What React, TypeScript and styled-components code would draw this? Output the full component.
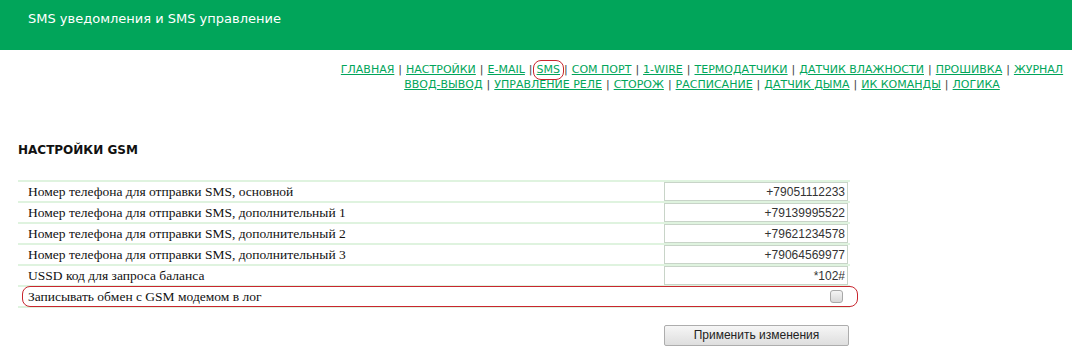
import React from "react";
import styled, { createGlobalStyle } from "styled-components";

const Global = createGlobalStyle`
  html, body { margin: 0; padding: 0; background: #fff; }
  body { font-family: "DejaVu Sans", Verdana, sans-serif; }
`;

const Header = styled.header`
  height: 50px;
  background: #01a55a;
  color: #fff;
  font-family: "DejaVu Sans", Verdana, sans-serif;
  font-size: 13px;
  padding: 11px 0 0 28px;
  box-sizing: border-box;
`;

const Nav = styled.nav`
  margin: 12px 0 0 332px;
  text-align: center;
  white-space: nowrap;
  font-family: "DejaVu Sans", Verdana, sans-serif;
  font-size: 11px;
  line-height: 15px;
  color: #444;
`;

const NavLink = styled.a<{ $marked?: boolean }>`
  color: #01a55a;
  text-decoration: underline;
  position: relative;
  &::after {
    content: "";
    display: ${(p) => (p.$marked ? "block" : "none")};
    position: absolute;
    left: -4px;
    right: -4px;
    top: -3px;
    bottom: -4px;
    border: 1.5px solid #c8262e;
    border-radius: 8px;
  }
`;

const Sep = styled.span`
  color: #444;
  margin: 0 4px;
`;

const Title = styled.h2`
  margin: 51px 0 0 18px;
  font-family: "DejaVu Sans", Verdana, sans-serif;
  font-size: 12px;
  font-weight: bold;
  color: #111;
`;

const Table = styled.div`
  margin: 23px 0 0 18px;
  width: 832px;
  border-top: 2px solid #dff3df;
`;

const Row = styled.div<{ $marked?: boolean }>`
  position: relative;
  display: flex;
  align-items: center;
  height: 19px;
  border-bottom: 2px solid #dff3df;
  &::after {
    content: "";
    display: ${(p) => (p.$marked ? "block" : "none")};
    position: absolute;
    left: 4px;
    right: -8px;
    top: -1px;
    bottom: -1px;
    border: 1.5px solid #c8262e;
    border-radius: 8px;
  }
`;

const Label = styled.div`
  flex: 1;
  padding-left: 10px;
  font-family: "Liberation Serif", "Times New Roman", serif;
  font-size: 13.5px;
  color: #111;
`;

const Input = styled.input`
  width: 184px;
  height: 19px;
  box-sizing: border-box;
  margin: 0 2px 0 0;
  border: 1px solid #c8d4c8;
  padding: 0 2px;
  text-align: right;
  font-family: "Liberation Sans", Arial, sans-serif;
  font-size: 12px;
  color: #333;
  background: #fff;
  outline: none;
`;

const Check = styled.span`
  width: 11px;
  height: 11px;
  margin-right: 7px;
  border: 1px solid #a8a8a8;
  border-radius: 3px;
  background: linear-gradient(#f4f4f4, #d8d8d8);
`;

const Actions = styled.div`
  margin: 16px 0 0 664px;
`;

const Button = styled.button`
  width: 185px;
  height: 21px;
  border: 1px solid #adadad;
  border-radius: 2px;
  background: linear-gradient(#f6f6f6, #dedede);
  font-family: "Liberation Sans", Arial, sans-serif;
  font-size: 12px;
  color: #222;
  padding: 0;
`;

const line1 = ["ГЛАВНАЯ", "НАСТРОЙКИ", "E-MAIL", "SMS", "COM ПОРТ", "1-WIRE", "ТЕРМОДАТЧИКИ", "ДАТЧИК ВЛАЖНОСТИ", "ПРОШИВКА", "ЖУРНАЛ"];
const line2 = ["ВВОД-ВЫВОД", "УПРАВЛЕНИЕ РЕЛЕ", "СТОРОЖ", "РАСПИСАНИЕ", "ДАТЧИК ДЫМА", "ИК КОМАНДЫ", "ЛОГИКА"];

const rows = [
  ["Номер телефона для отправки SMS, основной", "+79051112233"],
  ["Номер телефона для отправки SMS, дополнительный 1", "+79139995522"],
  ["Номер телефона для отправки SMS, дополнительный 2", "+79621234578"],
  ["Номер телефона для отправки SMS, дополнительный 3", "+79064569977"],
  ["USSD код для запроса баланса", "*102#"],
];

function Links({ items }: { items: string[] }) {
  return (
    <>
      {items.map((t, i) => (
        <React.Fragment key={t}>
          {i > 0 && <Sep>|</Sep>}
          <NavLink href="#" $marked={t === "SMS"}>{t}</NavLink>
        </React.Fragment>
      ))}
    </>
  );
}

export default function App() {
  return (
    <>
      <Global />
      <Header>SMS уведомления и SMS управление</Header>
      <Nav>
        <Links items={line1} />
        <br />
        <Links items={line2} />
      </Nav>
      <Title>НАСТРОЙКИ GSM</Title>
      <Table>
        {rows.map(([l, v]) => (
          <Row key={l}>
            <Label>{l}</Label>
            <Input defaultValue={v} />
          </Row>
        ))}
        <Row $marked>
          <Label>Записывать обмен с GSM модемом в лог</Label>
          <Check />
        </Row>
      </Table>
      <Actions>
        <Button>Применить изменения</Button>
      </Actions>
    </>
  );
}
